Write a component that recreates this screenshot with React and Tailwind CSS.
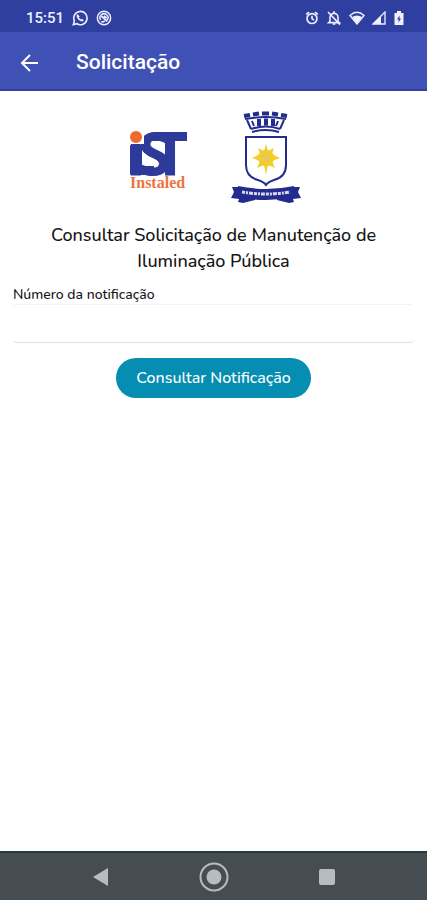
import { useState } from "react"

function StatusBar() {
    return (
        <div className="flex h-8 items-center justify-between bg-[#2f3f9f] pt-1 pr-[22px] pl-[26px] text-[#eef0ff]">
            <div className="flex items-center gap-2">
                <span className="font-['Roboto',sans-serif] text-[15px] font-medium">15:51</span>
                <svg width="16" height="16" viewBox="0 0 24 24" fill="none" stroke="currentColor" strokeWidth="2.4">
                    <path d="M2 22l1.6-5.6A10 10 0 1 1 7.4 20.6z" />
                    <path d="M8.5 6.5L7 8.5c.5 4.5 4 8 8.5 8.5l2-1.6-2.7-2-1.4 1c-1.5-.7-2.6-1.8-3.3-3.3l1-1.4z" fill="currentColor" strokeWidth="0.6" />
                </svg>
                <svg width="16" height="16" viewBox="0 0 24 24" fill="none" stroke="currentColor" strokeWidth="2.2">
                    <circle cx="12" cy="12" r="10" />
                    <path d="M7 15a6 6 0 1 1 10 0" />
                    <path d="M8 9l9 8M8 17c2 1.5 4 1 5-1M12 9l4 3" strokeWidth="2.6" />
                </svg>
            </div>
            <div className="flex items-center gap-[7px]">
                <svg width="14" height="14" viewBox="0 0 24 24" fill="none" stroke="currentColor" strokeWidth="2.8">
                    <circle cx="12" cy="13" r="8.5" />
                    <path d="M12 8v5l3.5 2.5M2 6l5-4M22 6l-5-4" />
                </svg>
                <svg width="16" height="16" viewBox="0 0 24 24" fill="none" stroke="currentColor" strokeWidth="2.4">
                    <path d="M6 17V11a6 6 0 0 1 12 0v6l2 2H4z" />
                    <path d="M12 2v3M3 3l18 19" />
                    <path d="M10 21h4" />
                </svg>
                <svg width="16" height="14" viewBox="0 0 16 14">
                    <path d="M1 4.5Q8-2 15 4.5L8 13z" fill="none" stroke="currentColor" strokeWidth="1.4" />
                    <path d="M3 6Q8 3 13 6L8 13z" fill="currentColor" />
                </svg>
                <svg width="14" height="14" viewBox="0 0 14 14">
                    <path d="M1 13L13 1v12z" fill="none" stroke="currentColor" strokeWidth="1.3" />
                    <path d="M1 13l8-8v8z" fill="currentColor" />
                </svg>
                <svg width="12" height="14" viewBox="0 0 12 14">
                    <path d="M4 0h4v2h2.5v12h-9V2H4z" fill="currentColor" />
                    <path d="M6.5 4.5L4 8.5h1.6v3L8 7.5H6.5z" fill="#2f3f9f" />
                </svg>
            </div>
        </div>
    )
}

function InstaledLogo() {
    return (
        <svg width="60" height="64" viewBox="0 0 60 64" className="overflow-visible" role="img" aria-label="iST Instaled">
            <g fill="#2d3a9a" stroke="#2d3a9a" strokeWidth="1" fontFamily="'Noto Sans', sans-serif" fontWeight="700" fontSize="59">
                <text x="-2" y="48">i</text>
                <text x="9" y="48">S</text>
                <text x="24" y="48">T</text>
            </g>
            {/* bars that join the mark */}
            <rect x="1" y="18" width="12" height="30" rx="1" fill="#2d3a9a" />
            <rect x="5" y="39" width="20" height="9" fill="#2d3a9a" />
            <rect x="25" y="5" width="33" height="9" fill="#2d3a9a" />
            <rect x="0" y="0" width="15" height="17" fill="#ffffff" />
            <circle cx="7" cy="10" r="6" fill="#ec6a2c" />
            <text x="1" y="61" fontFamily="'Liberation Serif', serif" fontWeight="700" fontSize="16" fill="#ee7340">Instaled</text>
        </svg>
    )
}

function CityCrest() {
    return (
        <svg width="74" height="95" viewBox="0 0 74 95" role="img" aria-label="Brasão do município">
            {/* crown */}
            <g fill="none" stroke="#232c8c">
                <path d="M15 5l6-1M24 3.5l6-1M33 2.5h7M43 2.5l6 1M52 4l6 1" strokeWidth="4" />
                <path d="M16 8Q37 4 57 8" strokeWidth="2" />
                <path d="M18 9l4 9M55 9l-4 9" strokeWidth="2" />
                <path d="M22 18Q37 13 51 18" strokeWidth="2" />
                <path d="M23 21Q37 17 50 21" strokeWidth="2" />
                <path d="M23 10l2 5M49 10l-2 5" strokeWidth="2" />
                <path d="M30 8v7M37 7.5v7M44 8v7" strokeWidth="4" />
            </g>
            {/* shield */}
            <path d="M17 26H57V54Q57 66 45 69Q39 71 37 74Q35 71 29 69Q17 66 17 54z" fill="#ffffff" stroke="#232c8c" strokeWidth="2" />
            <path d="M37 33l2 7 6-3-2 6 8 4-8 3 3 7-7-3-2 10-2-10-7 3 3-7-8-3 8-4-2-6 6 3z" fill="#f2cf2c" />
            <circle cx="37" cy="47" r="8" fill="#f2cb2c" />
            <circle cx="37" cy="47" r="4" fill="#e6c85a" />
            {/* ribbon */}
            <path d="M12 76H3l2 5-3 6 8 1-1 3 5 1 12-3V80zM62 76h9l-2 5 3 6-8 1 1 3-5 1-12-3V80z" fill="#232c8c" />
            <path d="M9 75Q37 81 65 75V86Q37 92 9 86z" fill="#232c8c" />
            <path d="M13 81Q37 85 61 81" fill="none" stroke="#d5d8f2" strokeWidth="3" strokeDasharray="3 1 2 1 4 1" />
        </svg>
    )
}

function NavigationBar() {
    return (
        <nav className="flex h-[49px] items-center justify-around border-t-2 border-[#243c40] bg-[#454d53] px-11 text-[#b6bdbe]">
            <button type="button" aria-label="Voltar" className="flex w-8 justify-center">
                <svg width="16" height="18" viewBox="0 0 16 18" fill="currentColor">
                    <path d="M0 9L15 0v18z" />
                </svg>
            </button>
            <button type="button" aria-label="Início" className="flex w-8 justify-center">
                <svg width="30" height="30" viewBox="0 0 30 30">
                    <circle cx="15" cy="15" r="13.5" fill="none" stroke="currentColor" strokeWidth="2" />
                    <circle cx="15" cy="15" r="7.5" fill="currentColor" />
                </svg>
            </button>
            <button type="button" aria-label="Recentes" className="flex w-8 justify-center">
                <span className="size-4 rounded-xs bg-[#b6bdbe]"></span>
            </button>
        </nav>
    )
}

function App() {
    const [numero, setNumero] = useState('')

    return (
        <div className="flex min-h-screen flex-col bg-white font-['Nunito','Noto_Sans',sans-serif] font-medium text-[#151515]">
            <StatusBar />
            <header className="flex h-[59px] items-center gap-9 border-b-2 border-[#3240a4] bg-[#3f51b5] px-5 pt-1 text-white">
                <button type="button" aria-label="Voltar">
                    <svg width="20" height="20" viewBox="0 0 20 20" fill="none" stroke="currentColor" strokeWidth="2">
                        <path d="M10 2L2 10l8 8M2 10h16" />
                    </svg>
                </button>
                <h1 className="font-['Roboto',sans-serif] text-[21px] font-medium">Solicitação</h1>
            </header>

            <main className="flex-1 px-[13px]">
                <div className="flex items-center justify-center gap-10 pt-5 pl-1">
                    <InstaledLogo />
                    <CityCrest />
                </div>
                <h2 className="mt-4 text-center text-lg leading-[26px] font-medium">
                    Consultar Solicitação de Manutenção de Iluminação Pública
                </h2>
                <form onSubmit={(e) => e.preventDefault()}>
                    <label htmlFor="numero" className="mt-3 block text-sm leading-[18px]">Número da notificação</label>
                    <input
                        id="numero"
                        type="text"
                        value={numero}
                        onChange={(e) => setNumero(e.target.value)}
                        className="block h-[39px] w-full rounded-sm border-t border-b border-t-[#f3f3f3] border-b-[#dfdfdf] px-2 outline-none"
                    />
                    <button type="submit" className="mx-auto mt-[15px] block h-10 rounded-full bg-[#058db2] px-5 text-base text-white">
                        Consultar Notificação
                    </button>
                </form>
            </main>

            <NavigationBar />
        </div>
    )
}

export default App
